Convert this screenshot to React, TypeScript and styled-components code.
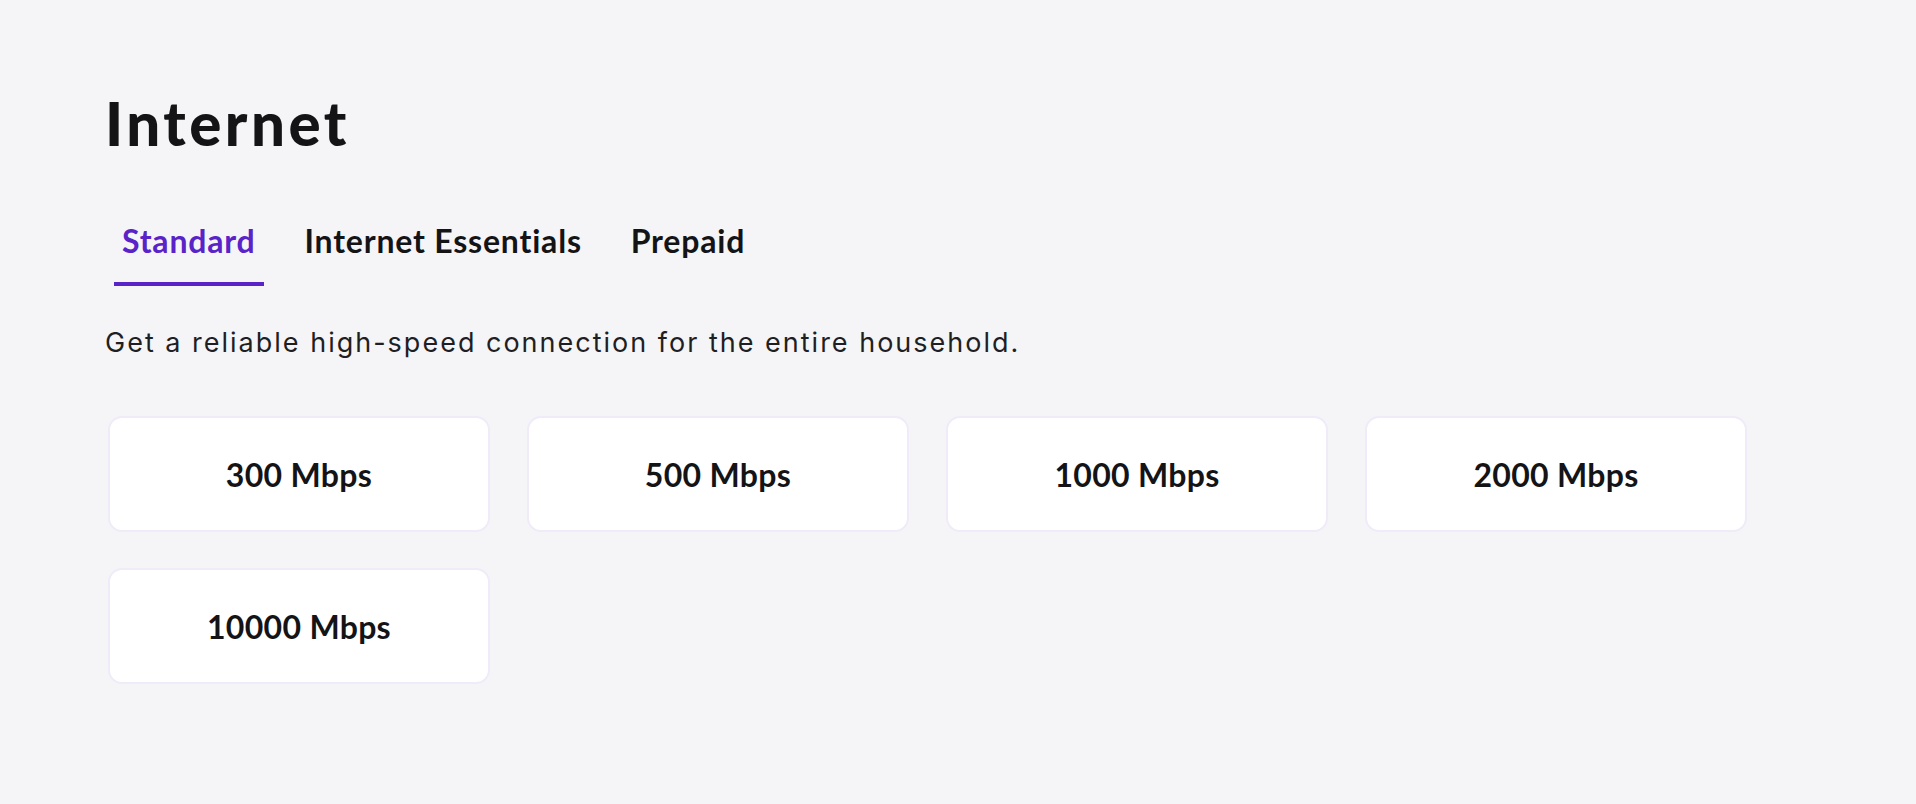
import React, { useState } from "react";
import styled, { createGlobalStyle } from "styled-components";

const Global = createGlobalStyle`
  html, body { margin: 0; padding: 0; background: #f5f5f8; }
  body { font-family: "Lato", "Noto Sans", sans-serif; color: #141417; }
`;

const Page = styled.main`
  padding: 87px 0 0 105px;
  display: flex;
  flex-direction: column;
  align-items: flex-start;
`;

const Title = styled.h1`
  margin: 0;
  font-family: "Lato", sans-serif;
  font-weight: 900;
  font-size: 60px;
  line-height: 72px;
  letter-spacing: 3.5px;
  color: #141417;
`;

const TabList = styled.div`
  display: flex;
  gap: 33px;
  margin-top: 65px;
  margin-left: 9px;
`;

const Tab = styled.button<{ $active?: boolean }>`
  appearance: none;
  background: none;
  border: 0;
  border-bottom: 4px solid ${(p) => (p.$active ? "#5a23c8" : "transparent")};
  padding: 0 8px 24px;
  font-family: "Lato", sans-serif;
  font-weight: 700;
  font-size: 32px;
  line-height: 34px;
  letter-spacing: 0.8px;
  color: ${(p) => (p.$active ? "#5a23c8" : "#141417")};
  cursor: pointer;
`;

const Description = styled.p`
  margin: 39px 0 0;
  font-family: "Inter", sans-serif;
  font-size: 27px;
  line-height: 36px;
  letter-spacing: 2px;
  color: #1f1f23;
`;

const Grid = styled.div`
  margin-top: 55px;
  margin-left: 3px;
  display: grid;
  grid-template-columns: repeat(4, 382px);
  column-gap: 37px;
  row-gap: 36px;
`;

const Card = styled.button`
  appearance: none;
  height: 116px;
  box-sizing: border-box;
  background: #ffffff;
  border: 2px solid #efebf9;
  border-radius: 14px;
  display: flex;
  align-items: center;
  justify-content: center;
  font-family: "Lato", sans-serif;
  font-weight: 700;
  font-size: 32px;
  letter-spacing: 0.3px;
  color: #141417;
  cursor: pointer;
`;

const tabs = ["Standard", "Internet Essentials", "Prepaid"];
const speeds = ["300 Mbps", "500 Mbps", "1000 Mbps", "2000 Mbps", "10000 Mbps"];

export default function App() {
  const [active, setActive] = useState(0);
  return (
    <>
      <Global />
      <Page>
        <Title>Internet</Title>
        <TabList role="tablist">
          {tabs.map((t, i) => (
            <Tab key={t} $active={i === active} onClick={() => setActive(i)}>
              {t}
            </Tab>
          ))}
        </TabList>
        <Description>Get a reliable high-speed connection for the entire household.</Description>
        <Grid>
          {speeds.map((s) => (
            <Card key={s}>{s}</Card>
          ))}
        </Grid>
      </Page>
    </>
  );
}
